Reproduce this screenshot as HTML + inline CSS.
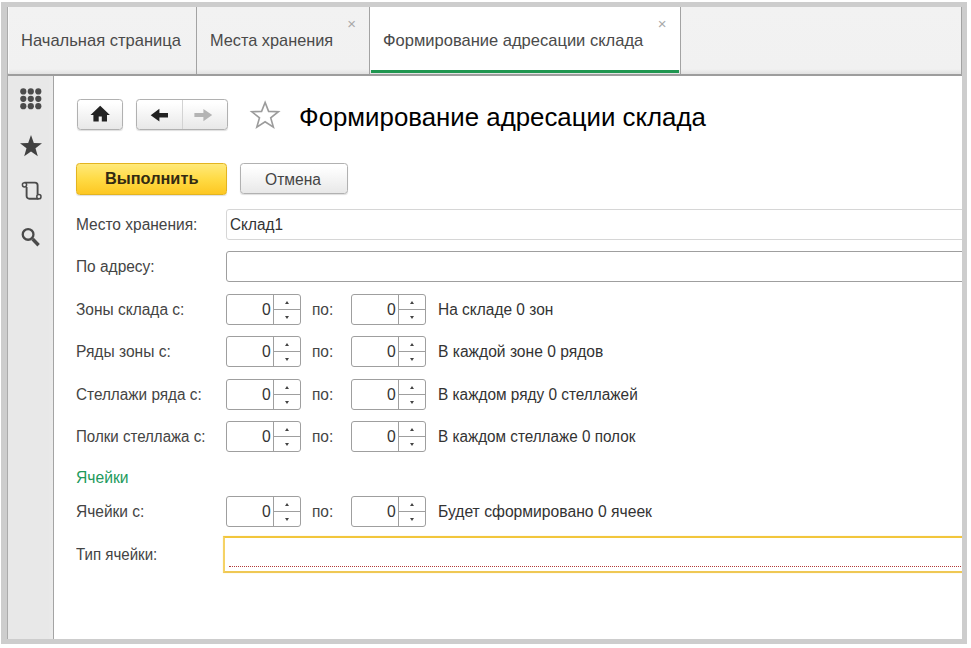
<!DOCTYPE html>
<html lang="ru">
<head>
<meta charset="utf-8">
<title>Формирование адресации склада</title>
<style>
html,body{margin:0;padding:0;}
body{width:971px;height:648px;overflow:hidden;background:#fff;position:relative;font-family:"Liberation Sans",sans-serif;color:#333;}
.a{position:absolute;}
.t{position:absolute;line-height:30px;white-space:nowrap;transform-origin:0 0;}
.spin{position:absolute;width:73px;height:29px;border:1px solid #9f9f9f;border-radius:3px;background:#fff;}
.spin i{position:absolute;display:block;}
.spin .d{left:46px;top:0;width:1px;height:29px;background:#9f9f9f;}
.spin .h{left:47px;top:14px;width:26px;height:1px;background:#9f9f9f;}
.spin .u{left:58px;top:6px;width:0;height:0;border-left:2.2px solid transparent;border-right:2.2px solid transparent;border-bottom:3px solid #444;}
.spin .w{left:58px;top:21px;width:0;height:0;border-left:2.2px solid transparent;border-right:2.2px solid transparent;border-top:3px solid #444;}
.btn{position:absolute;border:1px solid #b1b1b1;border-radius:3.5px;background:linear-gradient(#ffffff 10%,#e8e8e8);box-sizing:border-box;box-shadow:0 1px 1px rgba(0,0,0,0.13);}
.close{position:absolute;font-size:15px;color:#a9a9a9;line-height:10px;}
</style>
</head>
<body>
<!-- window frame -->
<div class="a" style="left:1px;top:2px;width:966px;height:642px;background:#cdcdcd;"></div>
<div class="a" style="left:7px;top:7px;width:955px;height:632px;background:#fff;"></div>
<!-- tab bar -->
<div class="a" style="left:7px;top:7px;width:955px;height:67px;background:linear-gradient(#f2f2f2 0,#f1f1f1 62px,#e2e2e2 67px);"></div>
<div class="a" style="left:370px;top:7px;width:310px;height:63px;background:#fff;"></div>
<div class="a" style="left:371px;top:70px;width:308px;height:3.4px;background:#1f9650;"></div>
<div class="a" style="left:7px;top:73.6px;width:955px;height:2px;background:#9d9d9d;"></div>
<div class="a" style="left:7px;top:7px;width:1px;height:632px;background:#ababab;"></div>
<div class="a" style="left:8px;top:7px;width:1px;height:66px;background:#fafafa;"></div>
<div class="a" style="left:961px;top:7px;width:1px;height:68px;background:#a2a2a2;"></div>
<div class="a" style="left:196px;top:7px;width:1px;height:67px;background:#a3a3a3;"></div>
<div class="a" style="left:369.4px;top:7px;width:1px;height:67px;background:#a3a3a3;"></div>
<div class="a" style="left:680.3px;top:7px;width:1px;height:67px;background:#a3a3a3;"></div>

<div class="t" style="left:20.5px;top:26.0px;font-size:16.6px;color:#4a4a4a;transform:scaleX(0.9963);">Начальная страница</div>
<div class="t" style="left:209.5px;top:26.0px;font-size:16.6px;color:#4a4a4a;transform:scaleX(0.9823);">Места хранения</div>
<div class="t" style="left:383.0px;top:26.0px;font-size:16.6px;color:#4a4a4a;transform:scaleX(0.9954);">Формирование адресации склада</div>

<div class="close" style="left:347.3px;top:18.5px;">×</div>
<div class="close" style="left:657.8px;top:18.5px;">×</div>

<!-- side panel -->
<div class="a" style="left:8px;top:75.6px;width:45px;height:563.4px;background:linear-gradient(90deg,#e8e8e8 0,#e8e8e8 40px,#ebebeb 45px);"></div>
<div class="a" style="left:53px;top:75.6px;width:1px;height:563.4px;background:#a4a4a4;"></div>
<svg class="a" style="left:19px;top:87px;" width="24" height="24" viewBox="0 0 24 24">
<g fill="#4c4c4c">
<circle cx="4.3" cy="4.4" r="3.1"/><circle cx="11.8" cy="4.4" r="3.1"/><circle cx="19.3" cy="4.4" r="3.1"/>
<circle cx="4.3" cy="11.8" r="3.1"/><circle cx="11.8" cy="11.8" r="3.1"/><circle cx="19.3" cy="11.8" r="3.1"/>
<circle cx="4.3" cy="19.2" r="3.1"/><circle cx="11.8" cy="19.2" r="3.1"/><circle cx="19.3" cy="19.2" r="3.1"/>
</g></svg>
<svg class="a" style="left:19px;top:134px;" width="24" height="24" viewBox="0 0 24 24">
<polygon fill="#414141" points="12,1 14.8,9 23,9.2 16.5,14.2 18.8,22.2 12,17.5 5.2,22.2 7.5,14.2 1,9.2 9.2,9"/>
</svg>
<svg class="a" style="left:18px;top:178px;" width="28" height="26" viewBox="18 178 28 26">
<path d="M24.4 182.6 H35 a2.6 2.6 0 0 1 2.6 2.6 V194.6 M26.6 187 V196 a2.7 2.7 0 0 0 2.7 2.7 H38.6" fill="none" stroke="#4a4a4a" stroke-width="1.9"/>
<circle cx="24.5" cy="184.8" r="2.1" fill="#eee" stroke="#4a4a4a" stroke-width="1.5"/>
<circle cx="38.9" cy="196.7" r="2.1" fill="#eee" stroke="#4a4a4a" stroke-width="1.5"/>
</svg>
<svg class="a" style="left:18px;top:224px;" width="28" height="26" viewBox="18 224 28 26">
<circle cx="28.1" cy="234.4" r="5.35" fill="none" stroke="#4a4a4a" stroke-width="2.3"/>
<path d="M32.6 239 L38.6 245.2" stroke="#4a4a4a" stroke-width="3.4" stroke-linecap="butt"/>
</svg>

<!-- navigation buttons -->
<div class="btn" style="left:77px;top:99.4px;width:46px;height:30.2px;"></div>
<div class="btn" style="left:136px;top:99.4px;width:92px;height:30.2px;"></div>
<div class="a" style="left:182px;top:100.4px;width:1px;height:28.2px;background:#d3d3d3;"></div>
<svg class="a" style="left:85px;top:102px;" width="30" height="24" viewBox="85 102 30 24">
<path d="M100.2 105.7 L90.5 114.9 H93.4 V121.6 H98.7 V116.6 H101.8 V121.6 H107 V114.9 H109.9 Z" fill="#222"/>
</svg>
<svg class="a" style="left:145px;top:102px;" width="30" height="24" viewBox="145 102 30 24">
<path d="M150.7 115.2 L159.4 108.8 V112.9 H168 V117.5 H159.4 V121.6 Z" fill="#222"/>
</svg>
<svg class="a" style="left:190px;top:102px;" width="30" height="24" viewBox="190 102 30 24">
<path d="M212.2 115.1 L203.4 108.9 V113.1 H194.4 V117.1 H203.4 V121.3 Z" fill="#b4b4b4"/>
</svg>
<svg class="a" style="left:248px;top:98px;" width="34" height="34" viewBox="248 98 34 34">
<polygon fill="#fff" stroke="#9c9c9c" stroke-width="1.6" stroke-linejoin="miter" points="265.1,102.4 268.6,111.4 278.4,111.7 270.7,117.8 273.4,127.2 265.1,121.8 256.8,127.2 259.5,117.8 251.8,111.7 261.6,111.4"/>
</svg>

<div class="t" style="left:299.0px;top:102px;font-size:26px;color:#000;transform:scaleX(0.9932);">Формирование адресации склада</div>

<!-- command buttons -->
<div class="a" style="left:76px;top:163px;width:151px;height:31.6px;box-sizing:border-box;border:1px solid #e3b420;border-radius:3.5px;background:linear-gradient(#ffe97a,#ffdb45 50%,#fdc722);box-shadow:0 1px 1px rgba(0,0,0,0.13);"></div>
<div class="btn" style="left:240px;top:163px;width:108px;height:31.4px;"></div>

<div class="t" style="left:104.5px;top:163.0px;font-size:16.4px;color:#332a12;font-weight:bold;transform:scaleX(0.9957);">Выполнить</div>
<div class="t" style="left:265.3px;top:164.5px;font-size:16px;color:#444;transform:scaleX(0.9743);">Отмена</div>

<!-- fields -->
<div class="a" style="left:226px;top:209px;width:760px;height:29.1px;border:1px solid #d6d6d6;border-radius:3px;"></div>
<div class="a" style="left:226px;top:251px;width:760px;height:29.2px;border:1px solid #9f9f9f;border-radius:3px;"></div>

<div class="t" style="left:75.8px;top:209.5px;font-size:16px;color:#444;transform:scaleX(0.9683);">Место хранения:</div>
<div class="t" style="left:230.3px;top:209.5px;font-size:16px;color:#333;transform:scaleX(0.9584);">Склад1</div>
<div class="t" style="left:75.8px;top:252.0px;font-size:16px;color:#444;transform:scaleX(0.9667);">По адресу:</div>
<div class="t" style="left:75.8px;top:295.0px;font-size:16px;color:#444;transform:scaleX(0.9685);">Зоны склада с:</div>
<div class="t" style="left:76.3px;top:337.0px;font-size:16px;color:#444;transform:scaleX(0.974);">Ряды зоны с:</div>
<div class="t" style="left:75.8px;top:380.0px;font-size:16px;color:#444;transform:scaleX(0.9577);">Стеллажи ряда с:</div>
<div class="t" style="left:76.3px;top:422.0px;font-size:16px;color:#444;transform:scaleX(0.9423);">Полки стеллажа с:</div>
<div class="t" style="left:76.3px;top:463.0px;font-size:16px;color:#219a5c;transform:scaleX(0.9789);">Ячейки</div>
<div class="t" style="left:76.3px;top:497.0px;font-size:16px;color:#444;transform:scaleX(0.9696);">Ячейки с:</div>
<div class="t" style="left:76.3px;top:540.0px;font-size:16px;color:#444;transform:scaleX(0.9408);">Тип ячейки:</div>
<div class="t" style="left:437.8px;top:295.0px;font-size:16px;color:#333;transform:scaleX(0.967);">На складе 0 зон</div>
<div class="t" style="left:437.8px;top:337.0px;font-size:16px;color:#333;transform:scaleX(0.9756);">В каждой зоне 0 рядов</div>
<div class="t" style="left:438.3px;top:380.0px;font-size:16px;color:#333;transform:scaleX(0.9609);">В каждом ряду 0 стеллажей</div>
<div class="t" style="left:438.3px;top:422.0px;font-size:16px;color:#333;transform:scaleX(0.9539);">В каждом стеллаже 0 полок</div>
<div class="t" style="left:438.3px;top:497.0px;font-size:16px;color:#333;transform:scaleX(0.98);">Будет сформировано 0 ячеек</div>
<div class="spin" style="left:226px;top:294px;"><i class="d"></i><i class="h"></i><i class="u"></i><i class="w"></i></div>
<div class="spin" style="left:351px;top:294px;"><i class="d"></i><i class="h"></i><i class="u"></i><i class="w"></i></div>
<div class="t" style="left:312.3px;top:295.0px;font-size:16px;color:#444;transform:scaleX(0.9664);">по:</div>
<div class="t" style="left:261.8px;top:295.0px;font-size:16px;color:#333;transform:scaleX(0.98);">0</div>
<div class="t" style="left:386.8px;top:295.0px;font-size:16px;color:#333;transform:scaleX(0.98);">0</div>
<div class="spin" style="left:226px;top:336.4px;"><i class="d"></i><i class="h"></i><i class="u"></i><i class="w"></i></div>
<div class="spin" style="left:351px;top:336.4px;"><i class="d"></i><i class="h"></i><i class="u"></i><i class="w"></i></div>
<div class="t" style="left:312.3px;top:337.0px;font-size:16px;color:#444;transform:scaleX(0.9664);">по:</div>
<div class="t" style="left:261.8px;top:337.0px;font-size:16px;color:#333;transform:scaleX(0.98);">0</div>
<div class="t" style="left:386.8px;top:337.0px;font-size:16px;color:#333;transform:scaleX(0.98);">0</div>
<div class="spin" style="left:226px;top:378.8px;"><i class="d"></i><i class="h"></i><i class="u"></i><i class="w"></i></div>
<div class="spin" style="left:351px;top:378.8px;"><i class="d"></i><i class="h"></i><i class="u"></i><i class="w"></i></div>
<div class="t" style="left:312.3px;top:380.0px;font-size:16px;color:#444;transform:scaleX(0.9664);">по:</div>
<div class="t" style="left:261.8px;top:380.0px;font-size:16px;color:#333;transform:scaleX(0.98);">0</div>
<div class="t" style="left:386.8px;top:380.0px;font-size:16px;color:#333;transform:scaleX(0.98);">0</div>
<div class="spin" style="left:226px;top:421.2px;"><i class="d"></i><i class="h"></i><i class="u"></i><i class="w"></i></div>
<div class="spin" style="left:351px;top:421.2px;"><i class="d"></i><i class="h"></i><i class="u"></i><i class="w"></i></div>
<div class="t" style="left:312.3px;top:422.0px;font-size:16px;color:#444;transform:scaleX(0.9664);">по:</div>
<div class="t" style="left:261.8px;top:422.0px;font-size:16px;color:#333;transform:scaleX(0.98);">0</div>
<div class="t" style="left:386.8px;top:422.0px;font-size:16px;color:#333;transform:scaleX(0.98);">0</div>
<div class="spin" style="left:226px;top:496px;"><i class="d"></i><i class="h"></i><i class="u"></i><i class="w"></i></div>
<div class="spin" style="left:351px;top:496px;"><i class="d"></i><i class="h"></i><i class="u"></i><i class="w"></i></div>
<div class="t" style="left:312.3px;top:497.0px;font-size:16px;color:#444;transform:scaleX(0.9664);">по:</div>
<div class="t" style="left:261.8px;top:497.0px;font-size:16px;color:#333;transform:scaleX(0.98);">0</div>
<div class="t" style="left:386.8px;top:497.0px;font-size:16px;color:#333;transform:scaleX(0.98);">0</div>

<div class="a" style="left:223px;top:536px;width:760px;height:33px;border:2px solid #f2c63c;border-left-color:#f5d265;border-bottom-color:#efc854;box-shadow:0 0 1px rgba(243,200,70,0.45);"></div>
<div class="a" style="left:229px;top:566px;width:740px;height:0;border-top:1px dotted #b13a3a;"></div>

<!-- right/bottom frame overlay -->
<div class="a" style="left:962px;top:2px;width:5px;height:642px;background:#cdcdcd;"></div>
<div class="a" style="left:967px;top:0;width:4px;height:648px;background:#fff;"></div>
</body>
</html>
